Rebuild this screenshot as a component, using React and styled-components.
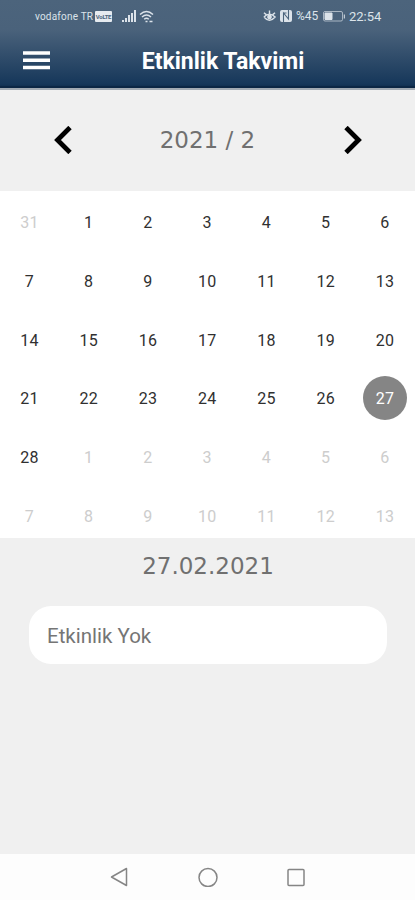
import styled, { createGlobalStyle } from 'styled-components'

const GlobalStyle = createGlobalStyle`
  * {
    box-sizing: border-box;
  }

  body {
    margin: 0;
    font-family: Roboto, 'Liberation Sans', sans-serif;
    background-color: #f0f0f0;
  }

  button {
    display: flex;
    padding: 0;
    border: 0;
    background: none;
    font: inherit;
  }

  svg {
    display: block;
    flex: none;
  }
`

const Screen = styled.div`
  height: 900px;
  display: flex;
  flex-direction: column;
  overflow: hidden;
`

const Header = styled.header`
  height: 90px;
  color: white;
  background: linear-gradient(#4c647c 0, #4a627b 30px, #16375a 84px, #123152 86px);
  border-bottom: 2px solid #a3abb3;
  box-shadow: inset 0 -2px #0c2745;
`

const StatusBar = styled.div`
  height: 32px;
  padding: 0 34px 0 35px;
  display: flex;
  align-items: center;
  color: #dce3ea;
`

const Carrier = styled.span`
  width: 60px;
  font-size: 10px;
  letter-spacing: 0.2px;
  white-space: nowrap;
`

const VolteBadge = styled.span`
  width: 17px;
  height: 11px;
  margin-right: 10px;
  font-size: 6px;
  font-weight: 700;
  line-height: 11px;
  text-align: center;
  letter-spacing: -0.3px;
  color: #4c647c;
  background-color: #e6ebf0;
  border-radius: 1px;
`

const SignalGroup = styled.div`
  display: flex;
  gap: 3px;
`

const StatusRight = styled.div`
  margin-left: auto;
  display: flex;
  align-items: center;
  gap: 4px;
`

const StatusText = styled.span`
  width: ${props => props.$width}px;
  font-size: ${props => props.$size}px;
  white-space: nowrap;
`

const AppBar = styled.div`
  height: 56px;
  padding: 0 23px;
  display: grid;
  grid-template-columns: 28px 1fr 28px;
  align-items: center;
`

const Title = styled.h1`
  margin: 0;
  padding: 4px 0 0 31px;
  font-size: 23px;
  line-height: 28px;
  font-weight: 700;
  text-align: center;
  white-space: nowrap;
`

const MonthBar = styled.div`
  height: 101px;
  padding: 0 53px 1px;
  display: flex;
  align-items: center;
  justify-content: space-between;
`

const Days = styled.div`
  height: 347px;
  background-color: white;
  display: grid;
  grid-template-columns: repeat(7, 59.25px);
  grid-auto-rows: 58.8px;
  overflow: hidden;
`

const Day = styled.button`
  width: 44px;
  height: 44px;
  margin: 9px 0 0 7.5px;
  padding-top: 1px;
  align-items: center;
  justify-content: center;
  border-radius: 50%;
  font-size: 16px;
  letter-spacing: 0.3px;
  color: ${props => (props.$selected ? 'white' : props.$muted ? '#cdcdcd' : '#303030')};
  background-color: ${props => (props.$selected ? '#858585' : 'transparent')};
`

const Agenda = styled.section`
  flex: 1;
  padding: 16px 28px 0 29px;
  display: flex;
  flex-direction: column;
  align-items: center;
`

const EventCard = styled.div`
  width: 100%;
  height: 58px;
  margin-top: 28px;
  padding: 2px 18px 0;
  display: flex;
  align-items: center;
  border-radius: 22px;
  font-size: 20.5px;
  color: #757575;
  background-color: white;
`

const SquareText = styled.div`
  height: 24px;
  font-family: 'DejaVu Sans', sans-serif;
  font-size: 23px;
  line-height: 24px;
  white-space: nowrap;
  color: #707070;
`

const NavBar = styled.nav`
  height: 46px;
  padding: 0 109px;
  display: flex;
  align-items: center;
  justify-content: space-between;
  background-color: #fdfdfd;
`

const days = [31, ...Array.from({ length: 28 }, (_, i) => i + 1), ...Array.from({ length: 13 }, (_, i) => i + 1)]

const Signal = () => (
  <svg width="14" height="12" viewBox="0 0 14 12" fill="currentColor">
    <path d="M0 10h2v2H0zM3 8h2v4H3zM6 5h2v7H6zM9 3h2v9H9zM12 0h2v12h-2z" />
  </svg>
)

const Wifi = () => (
  <svg width="15" height="13" viewBox="0 0 15 13" fill="none" stroke="currentColor" strokeWidth="1.5">
    <path d="M1 4.5q6.5-6 13 0M3 7q4.5-4 9 0M5.2 9.3q2.3-2 4.6 0" />
    <path d="M6.5 11.5h2M10.5 11.5h3" />
  </svg>
)

const EyeComfort = () => (
  <svg width="13" height="12" viewBox="0 0 14 12" fill="none" stroke="currentColor" strokeWidth="1.5">
    <path d="M1 7q6-6 12 0q-6 7-12 0M7 0v4M1 2.5l2.5 2M13 2.5l-2.5 2" />
    <circle cx="7" cy="7" r="1.8" fill="currentColor" />
  </svg>
)

const Nfc = () => (
  <svg width="12" height="12" viewBox="0 0 12 12" fill="none">
    <rect width="12" height="12" rx="2" fill="currentColor" />
    <path d="M3.5 12V3l5 6V0M3.5 3h3" stroke="#4c647c" strokeWidth="1.1" />
  </svg>
)

const Battery = () => (
  <svg width="22" height="11" viewBox="0 0 22 11" fill="none" stroke="currentColor">
    <rect x="0.5" y="0.5" width="19" height="9.5" rx="1.5" strokeOpacity="0.65" />
    <path d="M2 2h7v6.5H2z" fill="currentColor" />
    <path d="M21.3 3.5v4" />
  </svg>
)

const App = () => (
  <>
    <GlobalStyle />
    <Screen>
      <Header>
        <StatusBar>
          <Carrier>vodafone TR</Carrier>
          <VolteBadge>VoLTE</VolteBadge>
          <SignalGroup>
            <Signal />
            <Wifi />
          </SignalGroup>
          <StatusRight>
            <EyeComfort />
            <Nfc />
            <StatusText $width={23} $size={12}>%45</StatusText>
            <Battery />
            <StatusText $width={32} $size={13}>22:54</StatusText>
          </StatusRight>
        </StatusBar>
        <AppBar>
          <button aria-label="Menu">
            <svg width="28" height="20" viewBox="0 0 28 20" stroke="white" strokeWidth="3.4">
              <path d="M0 3h27M0 10.3h27M0 17.5h27" />
            </svg>
          </button>
          <Title>Etkinlik Takvimi</Title>
        </AppBar>
      </Header>

      <MonthBar>
        <button aria-label="Previous">
          <svg width="20" height="28" viewBox="0 0 20 28" fill="none" stroke="black" strokeWidth="4.8">
            <path d="M17 1.5L4.500 14L17 26.500" />
          </svg>
        </button>
        <SquareText>2021 / 2</SquareText>
        <button aria-label="Next">
          <svg width="20" height="28" viewBox="0 0 20 28" fill="none" stroke="black" strokeWidth="4.8">
            <path d="M4 1.5L16.500 14L4 26.500" />
          </svg>
        </button>
      </MonthBar>

      <Days>
        {days.map((day, i) => (
          <Day key={i} $muted={i === 0 || i > 28} $selected={i === 27}>
            {day}
          </Day>
        ))}
      </Days>

      <Agenda>
        <SquareText>27.02.2021</SquareText>
        <EventCard>Etkinlik Yok</EventCard>
      </Agenda>

      <NavBar>
        <svg width="20" height="22" viewBox="0 0 20 22" fill="none" stroke="#858585" strokeWidth="1.5" strokeLinejoin="round">
          <path d="M17.5 2.500v17L2.500 11z" />
        </svg>
        <svg width="20" height="20" viewBox="0 0 20 20" fill="none" stroke="#858585" strokeWidth="1.5">
          <circle cx="10" cy="10.5" r="9" />
        </svg>
        <svg width="20" height="20" viewBox="0 0 20 20" fill="none" stroke="#858585" strokeWidth="1.5">
          <rect x="2" y="2.500" width="16" height="16" rx="1" />
        </svg>
      </NavBar>
    </Screen>
  </>
)

export default App
